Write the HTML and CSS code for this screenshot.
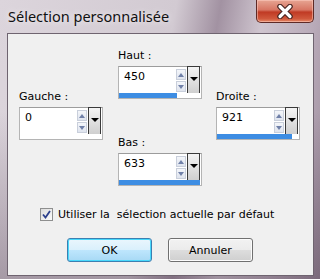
FILE: index.html
```html
<!DOCTYPE html>
<html lang="fr">
<head>
    <meta charset="UTF-8">
    <title>Sélection personnalisée</title>
    <link rel="stylesheet" href="styles.css">
</head>
<body>

<div class="window">
    <!-- Barre de titre -->
    <div class="titlebar">
        <span class="title">Sélection personnalisée</span>
        <button class="close" type="button">
            <svg width="22" height="15" viewBox="0 0 22 15">
                <path d="M6 2.5 L16 12.5 M16 2.5 L6 12.5" stroke="#4a2622" stroke-width="5.5" stroke-linecap="round"/>
                <path d="M6 2.5 L16 12.5 M16 2.5 L6 12.5" stroke="#ffffff" stroke-width="3.2" stroke-linecap="round"/>
            </svg>
        </button>
    </div>

    <div class="client">
        <div class="fields">
            <!-- Gauche -->
            <div class="col col-side">
                <div class="field">
                    <label class="field-label">Gauche :</label>
                    <div class="spin">
                        <div class="spin-main">
                            <span class="spin-value">0</span>
                            <span class="spin-arrows">
                                <span class="arrow arrow-up"></span>
                                <span class="arrow arrow-down"></span>
                            </span>
                            <span class="spin-drop"></span>
                        </div>
                        <div class="spin-track"><div class="spin-fill" style="width: 0%"></div></div>
                    </div>
                </div>
            </div>

            <!-- Haut / Bas -->
            <div class="col col-mid">
                <div class="field">
                    <label class="field-label">Haut :</label>
                    <div class="spin">
                        <div class="spin-main">
                            <span class="spin-value">450</span>
                            <span class="spin-arrows">
                                <span class="arrow arrow-up"></span>
                                <span class="arrow arrow-down"></span>
                            </span>
                            <span class="spin-drop"></span>
                        </div>
                        <div class="spin-track"><div class="spin-fill" style="width: 71%"></div></div>
                    </div>
                </div>
                <div class="field field-bottom">
                    <label class="field-label">Bas :</label>
                    <div class="spin">
                        <div class="spin-main">
                            <span class="spin-value">633</span>
                            <span class="spin-arrows">
                                <span class="arrow arrow-up"></span>
                                <span class="arrow arrow-down"></span>
                            </span>
                            <span class="spin-drop"></span>
                        </div>
                        <div class="spin-track"><div class="spin-fill" style="width: 100%"></div></div>
                    </div>
                </div>
            </div>

            <!-- Droite -->
            <div class="col col-side">
                <div class="field">
                    <label class="field-label">Droite :</label>
                    <div class="spin">
                        <div class="spin-main">
                            <span class="spin-value">921</span>
                            <span class="spin-arrows">
                                <span class="arrow arrow-up"></span>
                                <span class="arrow arrow-down"></span>
                            </span>
                            <span class="spin-drop"></span>
                        </div>
                        <div class="spin-track"><div class="spin-fill" style="width: 92%"></div></div>
                    </div>
                </div>
            </div>
        </div>

        <label class="check">
            <span class="check-box">
                <svg width="9" height="9" viewBox="0 0 9 9">
                    <path d="M1 4.5 L3.5 7.5 L8 1" fill="none" stroke="#2b3f8c" stroke-width="1.8"/>
                </svg>
            </span>
            <span class="check-text">Utiliser la  sélection actuelle par défaut</span>
        </label>

        <div class="buttons">
            <button class="btn btn-default" type="button">OK</button>
            <button class="btn" type="button">Annuler</button>
        </div>
    </div>
</div>

</body>
</html>
```

FILE: styles.css
```css
* {
    box-sizing: border-box;
}
body {
    margin: 0;
    font-family: "DejaVu Sans", Verdana, sans-serif;
    font-size: 11px;
}
.window {
    width: 320px;
    height: 279px;
    display: flex;
    flex-direction: column;
    padding: 0 6px 3px 7px;
    background:
        linear-gradient(to bottom, rgba(255,255,255,0) 40%, rgba(70,50,70,0.35) 100%),
        linear-gradient(100deg, #dcd5dc 0%, #d2cad2 48%, #a292a2 60%, #cfc5cf 72%, #b9abb9 86%, #988898 100%);
}
.titlebar {
    height: 33px;
    display: flex;
    align-items: flex-start;
    flex-shrink: 0;
}
.title {
    font-family: "Noto Sans", sans-serif;
    font-size: 14.5px;
    color: #111;
    margin: 6px 0 0 1px;
    text-shadow: 0 0 6px rgba(255,255,255,0.9);
}
.close {
    margin-left: auto;
    width: 58px;
    height: 23px;
    padding: 0;
    border: 1px solid #5e2a26;
    border-top: none;
    border-radius: 0 0 5px 5px;
    background: linear-gradient(to bottom, #e7a593 0%, #d77563 45%, #c03a24 55%, #d0583c 85%, #e58a68 100%);
    box-shadow: inset 0 0 0 1px rgba(255,210,200,0.5);
    display: flex;
    align-items: center;
    justify-content: center;
}
.client {
    flex: 1;
    background: #f0f0f0;
    border: 1px solid #6f6470;
    display: flex;
    flex-direction: column;
}
.fields {
    display: flex;
    padding-left: 11px;
}
.col-side {
    padding-top: 56px;
}
.col-mid {
    padding-top: 15px;
    margin: 0 14px 0 15px;
}
.field-label {
    display: block;
    line-height: 14px;
    margin-bottom: 3px;
}
.field-bottom {
    margin-top: 37px;
}
.spin {
    width: 84px;
    height: 33px;
    border: 1px solid #b4b4b4;
    border-top-color: #9c9c9c;
    background: #fff;
    display: flex;
    flex-direction: column;
}
.spin-main {
    display: flex;
    height: 26px;
}
.spin-value {
    flex: 1;
    padding: 3px 0 0 5px;
    line-height: 14px;
}
.spin-arrows {
    width: 10px;
    display: flex;
    flex-direction: column;
    gap: 1px;
    padding-top: 2px;
}
.arrow {
    height: 11px;
    border: 1px solid #c9cfdb;
    background: linear-gradient(to bottom, #f4f6fa, #dfe4ee);
    display: flex;
    align-items: center;
    justify-content: center;
}
.arrow::after {
    content: "";
    border-left: 3px solid transparent;
    border-right: 3px solid transparent;
}
.arrow-up::after {
    border-bottom: 4px solid #7080a8;
}
.arrow-down::after {
    border-top: 4px solid #7080a8;
}
.spin-drop {
    width: 13px;
    height: 28px;
    margin: -1px 1px 0 1px;
    border: 1px solid #3a3a3a;
    background: linear-gradient(to bottom, #f4f4f4, #cfcfcf);
    display: flex;
    justify-content: center;
    padding-top: 10px;
}
.spin-drop::after {
    content: "";
    height: 0;
    border-left: 4px solid transparent;
    border-right: 4px solid transparent;
    border-top: 4px solid #000;
}
.spin-track {
    height: 5px;
    margin: 0 1px 0 0;
    background: #fff;
}
.spin-fill {
    height: 100%;
    background: #3d8de3;
}
.check {
    display: flex;
    align-items: center;
    margin: 21px 0 0 32px;
    height: 14px;
}
.check-box {
    width: 13px;
    height: 13px;
    border: 1px solid #8e8f8f;
    background: linear-gradient(135deg, #dcdcdc, #fbfbfb);
    display: flex;
    align-items: center;
    justify-content: center;
    margin-right: 5px;
}
.check-text {
    white-space: pre;
}
.buttons {
    display: flex;
    gap: 16px;
    margin: 17px 0 0 59px;
}
.btn {
    width: 85px;
    height: 24px;
    font-family: "DejaVu Sans", Verdana, sans-serif;
    font-size: 11px;
    color: #000;
    border: 1px solid #707070;
    border-radius: 3px;
    background: linear-gradient(to bottom, #f2f2f2 0%, #ebebeb 50%, #dddddd 51%, #cfcfcf 100%);
    box-shadow: inset 0 0 0 1px #fcfcfc;
}
.btn-default {
    border-color: #3c7fb1;
    background: linear-gradient(to bottom, #eaf6fd 0%, #d9f0fc 50%, #bee6fd 51%, #a7d9f5 100%);
    box-shadow: inset 0 0 0 1px #48d8fb;
}
```
